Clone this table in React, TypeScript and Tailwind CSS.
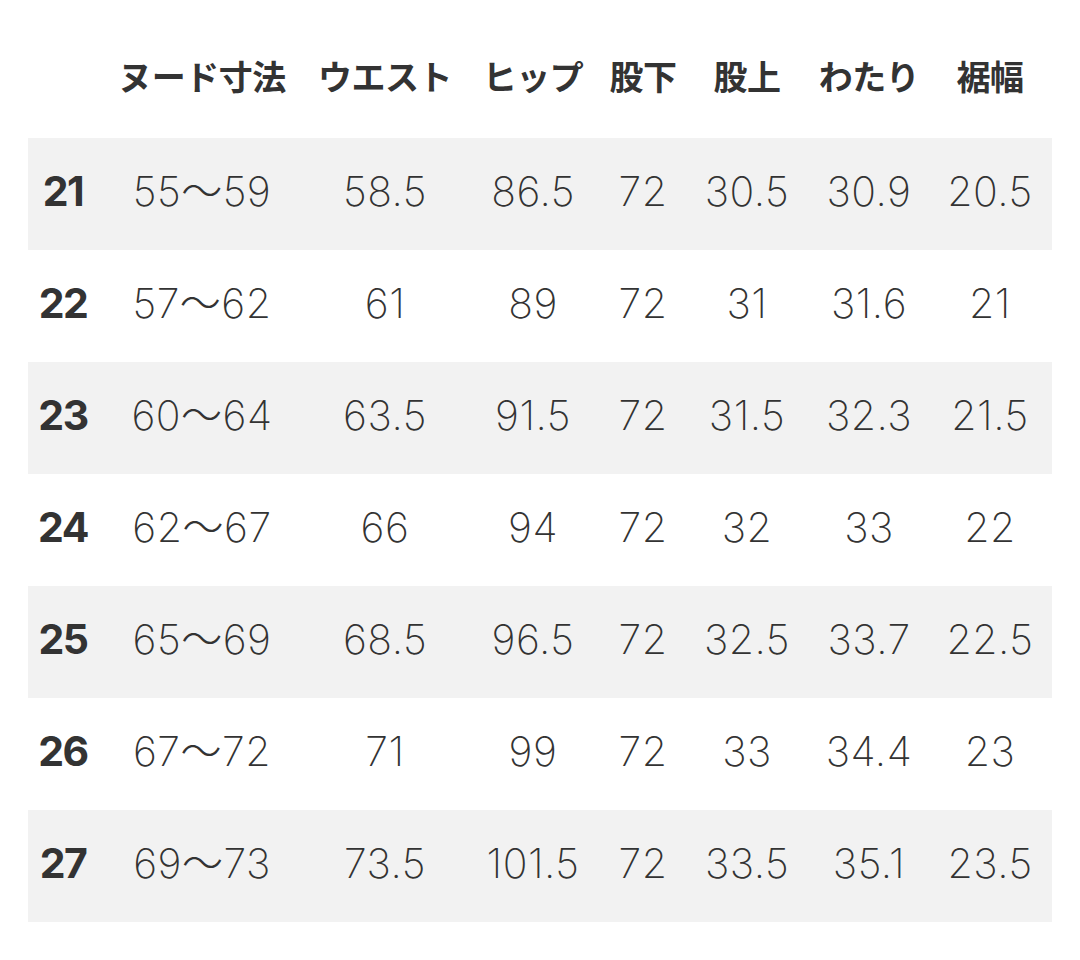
const headers = ['', 'ヌード寸法', 'ウエスト', 'ヒップ', '股下', '股上', 'わたり', '裾幅']

const rows: string[][] = [
  ['21', '55〜59', '58.5', '86.5', '72', '30.5', '30.9', '20.5'],
  ['22', '57〜62', '61', '89', '72', '31', '31.6', '21'],
  ['23', '60〜64', '63.5', '91.5', '72', '31.5', '32.3', '21.5'],
  ['24', '62〜67', '66', '94', '72', '32', '33', '22'],
  ['25', '65〜69', '68.5', '96.5', '72', '32.5', '33.7', '22.5'],
  ['26', '67〜72', '71', '99', '72', '33', '34.4', '23'],
  ['27', '69〜73', '73.5', '101.5', '72', '33.5', '35.1', '23.5'],
]

const cols = 'grid grid-cols-[70px_208px_158px_138px_82px_126px_118px_124px]'

export default function App() {
  return (
    <div className="w-[1080px] h-[960px] bg-white text-[#333] px-[28px] font-['Inter','Noto_Sans_CJK_JP',sans-serif]">
      {/* header */}
      <div className={`${cols} h-[138px] items-center pt-[12px]`}>
        {headers.map((h, i) => (
          <div
            key={i}
            className="text-center text-[34px] font-bold tracking-[-0.5px] font-['Noto_Sans_CJK_JP',sans-serif] whitespace-nowrap"
          >
            {h}
          </div>
        ))}
      </div>

      {rows.map((r, ri) => (
        <div
          key={r[0]}
          className={`${cols} h-[112px] items-center pb-[5px] ${ri % 2 === 0 ? 'bg-[#f2f2f2]' : 'bg-white'}`}
        >
          {r.map((c, ci) => (
            <div
              key={ci}
              className={`text-center whitespace-nowrap text-[41px] ${
                ci === 0 ? 'font-bold tracking-[-1.5px]' : 'font-extralight tracking-[0.5px]'
              }`}
            >
              {c}
            </div>
          ))}
        </div>
      ))}
    </div>
  )
}
